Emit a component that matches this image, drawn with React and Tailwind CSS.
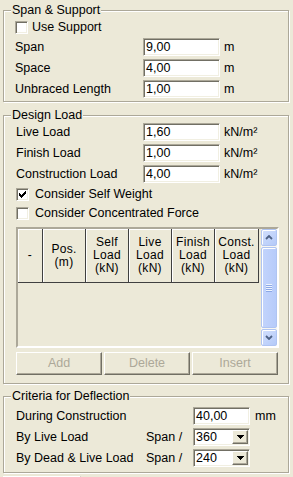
import React from "react";

const sunken =
  "border border-t-[#ACA899] border-l-[#ACA899] border-r-white border-b-white shadow-[inset_1px_1px_0_#716F64,inset_-1px_-1px_0_#F1EFE2]";
const raised =
  "border border-t-white border-l-white border-r-[#716F64] border-b-[#716F64] shadow-[inset_-1px_-1px_0_#ACA899]";

const CHECK_PIX = [
  [6, 0],
  [5, 1], [6, 1],
  [0, 2], [4, 2], [5, 2], [6, 2],
  [0, 3], [1, 3], [3, 3], [4, 3], [5, 3],
  [0, 4], [1, 4], [2, 4], [3, 4], [4, 4],
  [1, 5], [2, 5], [3, 5],
  [2, 6],
];

function Check({ checked }) {
  return (
    <span className={`w-[13px] h-[13px] bg-white flex items-center justify-center shrink-0 ${sunken}`}>
      {checked && (
        <svg width="7" height="7" viewBox="0 0 7 7" shapeRendering="crispEdges">
          {CHECK_PIX.map(([x, y]) => (
            <rect key={`${x}-${y}`} x={x} y={y} width="1" height="1" fill="#000" />
          ))}
        </svg>
      )}
    </span>
  );
}

function Field({ value, className }) {
  return (
    <div className={`h-[18px] bg-white flex items-center pl-[2px] leading-none ${sunken} ${className}`}>
      {value}
    </div>
  );
}

function Combo({ value }) {
  return (
    <div className={`h-[18px] w-[57px] bg-white flex items-center justify-between pl-[2px] pr-[1px] leading-none ${sunken}`}>
      <span>{value}</span>
      <div className={`w-[16px] h-[14px] bg-[#ECE9D8] flex items-center justify-center ${raised}`}>
        <svg width="7" height="4" viewBox="0 0 7 4" shapeRendering="crispEdges">
          <path d="M0 0h7v1h-1v1h-1v1h-1v1h-1v-1h-1v-1h-1v-1h-1z" fill="#000" />
        </svg>
      </div>
    </div>
  );
}

function Group({ title, className, children }) {
  return (
    <div
      className={`relative ml-[3px] w-[286px] border border-[#ACA899] shadow-[inset_1px_1px_0_#fff,1px_1px_0_#fff] ${className}`}
    >
      <span className="absolute -top-[8px] left-[7px] px-[1px] bg-[#ECE9D8] leading-[14px]">{title}</span>
      {children}
    </div>
  );
}

function Row({ label, value, unit, labelW }) {
  return (
    <div className="flex items-center h-[18px]">
      <span className={labelW}>{label}</span>
      <Field value={value} className="w-[77px]" />
      <span className="ml-[4px]">{unit}</span>
    </div>
  );
}

function HeaderCell({ lines, w }) {
  return (
    <div
      className={`${w} h-full flex flex-col items-center justify-center leading-[13px] border-r border-b border-[#404040] shadow-[inset_1px_1px_0_#fff] bg-[#ECE9D8] text-[12px] tracking-[0.3px]`}
    >
      {lines.map((l) => (
        <span key={l}>{l}</span>
      ))}
    </div>
  );
}

function ScrollBtn({ up }) {
  return (
    <div className="h-[17px] w-full rounded-[2px] border border-[#AFC4F2] bg-[linear-gradient(135deg,#D2DFFD,#B4CAF8)] shadow-[inset_1px_1px_0_#fff] flex items-center justify-center">
      <svg width="8" height="5" viewBox="0 0 8 5">
        <path
          d={up ? "M1 4 L4 1 L7 4" : "M1 1 L4 4 L7 1"}
          stroke="#4D6185"
          strokeWidth="1.8"
          fill="none"
        />
      </svg>
    </div>
  );
}

function ScrollBar() {
  return (
    <div className="w-[16px] h-full flex flex-col gap-[1px] bg-[#F7F6F1]">
      <ScrollBtn up />
      <div className="flex-1 rounded-[2px] border border-[#AFC4F2] bg-[linear-gradient(90deg,#C3D4FC,#B6CBFA)] shadow-[inset_1px_1px_0_#fff] flex flex-col items-center justify-center gap-[1px]">
        {[0, 1, 2, 3].map((i) => (
          <div key={i} className="w-[6px] h-[1px] bg-[#EEF4FE] shadow-[0_1px_0_#8CA8E6]" />
        ))}
      </div>
      <ScrollBtn />
    </div>
  );
}

function Btn({ label }) {
  return (
    <div className={`w-[86px] h-[23px] flex items-center justify-center text-[#ACA899] bg-[#ECE9D8] ${raised}`}>
      {label}
    </div>
  );
}

export default function App() {
  return (
    <div className="w-[293px] h-[477px] overflow-hidden bg-[#ECE9D8] text-black text-[12.5px] font-['Liberation_Sans',Arial,sans-serif] pt-[10px]">
      {/* Span & Support */}
      <Group title="Span & Support" className="h-[92px] pt-[10px] pl-[11px]">
        <div className="flex items-center h-[13px]">
          <Check />
          <span className="ml-[4px]">Use Support</span>
        </div>
        <div className="mt-[4px] flex flex-col gap-[3px]">
          <Row label="Span" value="9,00" unit="m" labelW="w-[128px]" />
          <Row label="Space" value="4,00" unit="m" labelW="w-[128px]" />
          <Row label="Unbraced Length" value="1,00" unit="m" labelW="w-[128px]" />
        </div>
      </Group>

      {/* Design Load */}
      <Group title="Design Load" className="mt-[13px] h-[269px] pt-[7px] pl-[12px]">
        <div className="flex flex-col gap-[3px]">
          <Row label="Live Load" value="1,60" unit="kN/m²" labelW="w-[127px]" />
          <Row label="Finish Load" value="1,00" unit="kN/m²" labelW="w-[127px]" />
          <Row label="Construction Load" value="4,00" unit="kN/m²" labelW="w-[127px]" />
        </div>
        <div className="mt-[5px] flex items-center h-[13px]">
          <Check checked />
          <span className="ml-[6px]">Consider Self Weight</span>
        </div>
        <div className="mt-[6px] flex items-center h-[13px]">
          <Check />
          <span className="ml-[6px]">Consider Concentrated Force</span>
        </div>

        <div className="mt-[7px] w-[263px] h-[121px] border-2 border-t-[#ACA899] border-l-[#ACA899] border-r-white border-b-white bg-[#ECE9D8] flex">
          <div className="w-[241px] flex flex-col">
            <div className="h-[54px] flex">
              <HeaderCell lines={["-"]} w="w-[25px]" />
              <HeaderCell lines={["Pos.", "(m)"]} w="w-[43px]" />
              <HeaderCell lines={["Self", "Load", "(kN)"]} w="w-[43px]" />
              <HeaderCell lines={["Live", "Load", "(kN)"]} w="w-[43px]" />
              <HeaderCell lines={["Finish", "Load", "(kN)"]} w="w-[43px]" />
              <HeaderCell lines={["Const.", "Load", "(kN)"]} w="w-[44px]" />
            </div>
          </div>
          <div className="ml-[2px]">
            <ScrollBar />
          </div>
        </div>

        <div className="mt-[4px] flex gap-[2px]">
          <Btn label="Add" />
          <Btn label="Delete" />
          <Btn label="Insert" />
        </div>
      </Group>

      {/* Criteria for Deflection */}
      <Group title="Criteria for Deflection" className="mt-[12px] h-[77px] pt-[10px] pl-[12px]">
        <div className="flex flex-col gap-[3px]">
          <div className="flex items-center h-[18px]">
            <span className="w-[177px]">During Construction</span>
            <Field value="40,00" className="w-[57px]" />
            <span className="ml-[5px]">mm</span>
          </div>
          <div className="flex items-center h-[18px]">
            <span className="w-[130px]">By Live Load</span>
            <span className="w-[47px]">Span /</span>
            <Combo value="360" />
          </div>
          <div className="flex items-center h-[18px]">
            <span className="w-[130px]">By Dead &amp; Live Load</span>
            <span className="w-[47px]">Span /</span>
            <Combo value="240" />
          </div>
        </div>
      </Group>

      <div className="ml-[3px] mt-[3px] w-[78px] h-[3px] border-t border-white border-r border-r-[#ACA899]" />
    </div>
  );
}
